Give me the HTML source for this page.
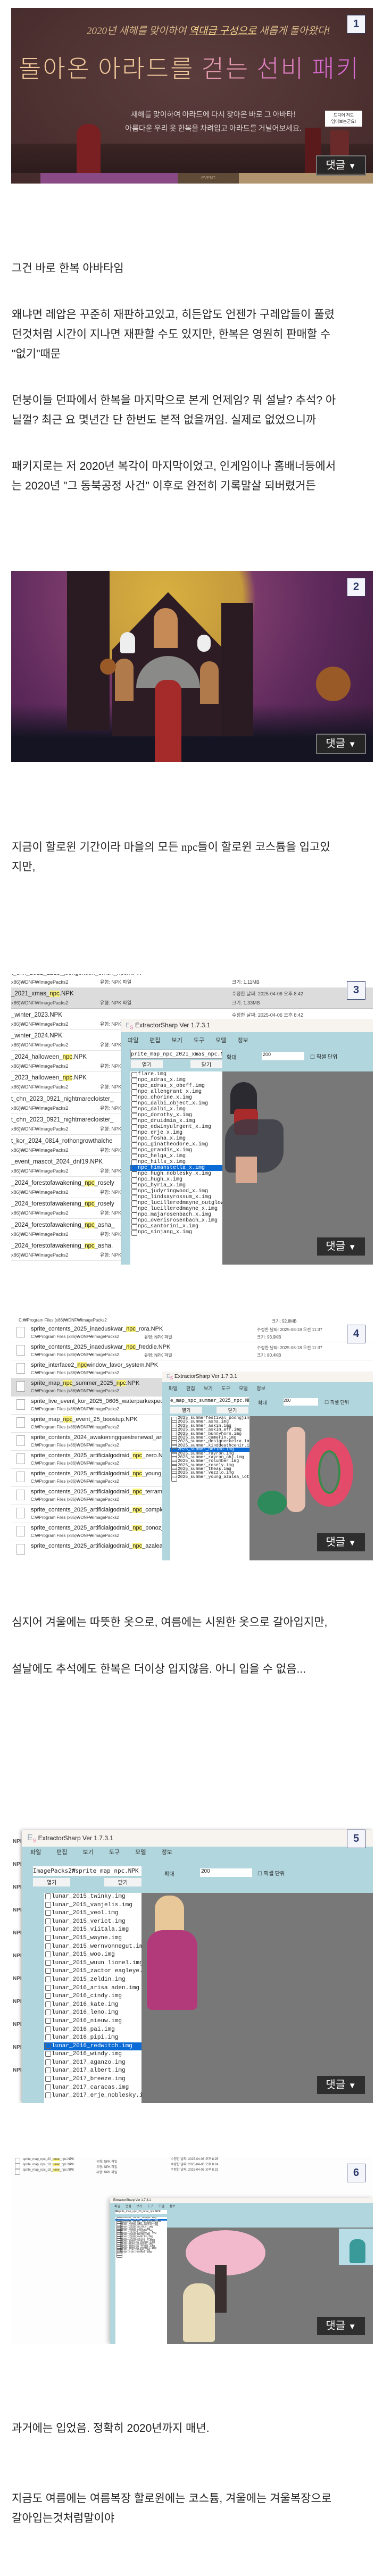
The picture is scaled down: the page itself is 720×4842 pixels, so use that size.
<!DOCTYPE html>
<html><head><meta charset="utf-8">
<style>
*{margin:0;padding:0;box-sizing:border-box}
body{width:720px;height:4842px;background:#fff;position:relative;overflow:hidden;font-family:"Liberation Sans","Noto Sans CJK KR",sans-serif;color:#222}
.t{position:absolute;left:22px;font-size:21px;line-height:37px;white-space:nowrap;color:#222}
.img{position:absolute;left:21px;width:680px;overflow:hidden}
.badge{position:absolute;right:14px;top:13px;width:35px;height:35px;background:#f4f5fa;border:1.5px solid #2c3a6b;color:#2c3a6b;font:bold 20px/32px "Liberation Sans",sans-serif;text-align:center;z-index:5}
.btn{position:absolute;right:13px;bottom:15px;width:94px;height:38px;background:rgba(40,40,40,.92);border:2px solid #777;color:#fff;font:20px/34px "Liberation Sans","Noto Sans CJK KR",sans-serif;text-align:center;z-index:5}
.btn span{font-size:15px}
.abs{position:absolute}
.row{position:absolute;left:0;height:39px;width:680px;border-bottom:1px solid #e4e4e4;font:12px/16px "Liberation Sans","Noto Sans CJK KR",sans-serif;color:#222;white-space:nowrap}
.row .a{position:absolute;left:0;top:3px;font-size:11.5px}
.row .b{position:absolute;left:0;top:20px;font-size:9px;color:#444}
.row .c{position:absolute;left:167px;top:20px;font-size:9px;color:#444}
.row .d{position:absolute;left:415px;top:3px;font-size:9px;color:#444}
.row .e{position:absolute;left:415px;top:20px;font-size:9px;color:#444}
.hl{background:#fbf27a}
.list{position:absolute;background:#fff;overflow:hidden;font:10px/11px "Liberation Mono",monospace;color:#222;white-space:nowrap}
.list div{padding-left:14px;position:relative;height:11px}
.list div:before{content:"";position:absolute;left:2px;top:1px;width:9px;height:9px;border:1px solid #666;border-radius:2px}
.list .sel{background:#0a6ad6;color:#fff}
.win{position:absolute;background:#b1d6dd}
.wt{position:absolute;left:0;right:0;top:0;background:#f7f4f0;font:12px "Liberation Sans",sans-serif;color:#222}
.menu{position:absolute;font:11px "Liberation Sans","Noto Sans CJK KR",sans-serif;color:#333;white-space:nowrap;word-spacing:18px}
.gray{position:absolute;background:#787878}
</style></head><body>

<!-- Image 1 -->
<div class="img" style="top:15px;height:330px;background:#4b2f30">
  <div class="abs" style="left:0;top:0;width:680px;height:330px;background:radial-gradient(ellipse at 50% 40%,#5a3c3c 0%,#4e3131 60%,#432a2b 100%)"></div>
  <div class="abs" style="left:142px;top:28px;font:italic 19px 'Liberation Serif','Noto Sans CJK KR',serif;color:#d9b98a;white-space:nowrap">2020년 새해를 맞이하여 <span style="color:#f3d38c;text-decoration:underline">역대급 구성으로</span> 새롭게 돌아왔다!</div>
  <div class="abs" style="left:14px;top:78px;font:300 46px 'Noto Sans CJK KR',sans-serif;color:#f0c89a;white-space:nowrap;letter-spacing:3px">돌아온 아라드를 <span style="color:#e89bb0">걷는</span> <span style="color:#e080c2">선비</span> <span style="color:#d66ad0">패키</span></div>
  <div class="abs" style="left:190px;top:187px;width:380px;text-align:center;font:14px/26px 'Noto Sans CJK KR',sans-serif;color:#d8cfcd">새해를 맞이하여 아라드에 다시 찾아온 바로 그 아바타!<br>아름다운 우리 옷 한복을 차려입고 아라드를 거닐어보세요.</div>
  <div class="abs" style="left:200px;top:254px;font:bold 13px 'Noto Sans CJK KR',sans-serif;color:#e8c98d;white-space:nowrap">판매 기간 : 2020년 1월 1일(수) 00시 ~ 1월 30일(목) 점검 전</div>
  <div class="abs" style="left:590px;top:193px;width:70px;height:30px;background:#fff;font:8px/12px 'Noto Sans CJK KR',sans-serif;text-align:center;padding-top:3px;color:#222">드디어 저도<br>입어보는군요!</div>
  <div class="abs" style="left:0;top:255px;width:680px;height:55px;background:linear-gradient(#3a2424,#2d1c1d)"></div>
  <div class="abs" style="left:123px;top:218px;width:45px;height:100px;background:#7a1f22;border-radius:20px 20px 6px 6px"></div>
  <div class="abs" style="left:552px;top:225px;width:30px;height:95px;background:#5a1a1c"></div>
  <div class="abs" style="left:600px;top:230px;width:35px;height:90px;background:#6a2a2a"></div>
  <div class="abs" style="left:55px;top:310px;width:258px;height:20px;background:#8a4a86"></div>
  <div class="abs" style="left:313px;top:310px;width:115px;height:20px;background:#5e4a36;font-size:8px;text-align:center;line-height:20px;color:#b9a08a">-EVENT-</div>
  <div class="abs" style="left:428px;top:310px;width:252px;height:20px;background:#b0946e"></div>
  <div class="badge">1</div><div class="btn">댓글 <span>▼</span></div>
</div>

<div class="t" style="top:486px">그건 바로 한복 아바타임</div>
<div class="t" style="top:573px">왜냐면 레압은 꾸준히 재판하고있고, 히든압도 언젠가 구레압들이 풀렸<br>던것처럼 시간이 지나면 재판할 수도 있지만, 한복은 영원히 판매할 수<br>"없기"때문</div>
<div class="t" style="top:734px">던붕이들 던파에서 한복을 마지막으로 본게 언제임? 뭐 설날? 추석? 아<br>닐껄? 최근 요 몇년간 단 한번도 본적 없을꺼임. 실제로 없었으니까</div>
<div class="t" style="top:858px">패키지로는 저 2020년 복각이 마지막이었고, 인게임이나  홈배너등에서<br>는 2020년 "그 동북공정 사건" 이후로 완전히 기록말살 되버렸거든</div>

<!-- Image 2 -->
<div class="img" style="top:1073px;height:359px;background:#3a1d3e">
  <div class="abs" style="left:0;top:0;width:680px;height:359px;background:radial-gradient(circle at 285px 50px,#d8b040 0,#c49a3c 150px,#7a3a6a 175px,#5e2a5c 300px,#3a1a3c 520px)"></div>
  <div class="abs" style="left:0;top:250px;width:680px;height:109px;background:linear-gradient(rgba(20,15,30,0),#141422 60%)"></div>
  <div class="abs" style="left:105px;top:0;width:80px;height:300px;background:#2a1a22"></div>
  <div class="abs" style="left:190px;top:40px;width:210px;height:270px;background:#2e1c24;clip-path:polygon(50% 0,100% 40%,100% 100%,0 100%,0 40%)"></div>
  <div class="abs" style="left:395px;top:60px;width:60px;height:250px;background:#2a1a22"></div>
  <div class="abs" style="left:268px;top:70px;width:45px;height:75px;background:#c58a55;border-radius:22px 22px 0 0"></div>
  <div class="abs" style="left:195px;top:165px;width:35px;height:80px;background:#b07a4a;border-radius:17px 17px 0 0"></div>
  <div class="abs" style="left:355px;top:170px;width:35px;height:80px;background:#b07a4a;border-radius:17px 17px 0 0"></div>
  <div class="abs" style="left:235px;top:160px;width:120px;height:60px;background:#8a8a88;border-radius:60px 60px 0 0"></div>
  <div class="abs" style="left:270px;top:205px;width:50px;height:154px;background:#a52a2a;border-radius:20px 20px 0 0"></div>
  <div class="abs" style="left:573px;top:180px;width:65px;height:65px;background:#9a5a28;border-radius:50%"></div>
  <div class="abs" style="left:167px;top:165px;width:30px;height:30px;background:#9a5a28;border-radius:50%"></div>
  <div class="abs" style="left:205px;top:115px;width:28px;height:40px;background:#eee;border-radius:14px 14px 4px 4px"></div>
  <div class="abs" style="left:350px;top:120px;width:25px;height:32px;background:#eee;border-radius:12px"></div>
  <div class="badge">2</div><div class="btn">댓글 <span>▼</span></div>
</div>

<div class="t" style="top:1574px">지금이 할로윈 기간이라 마을의 모든 <span style="font-family:'Liberation Serif',serif">npc</span>들이 할로윈 코스튬을 입고있<br>지만,</div>

<!-- Image 3 -->
<div class="img" style="top:1831px;height:546px;background:#fff">
  <div class="row" style="top:-13px"><span class="a">t_chn_2021_1215_joongchcon_omen_npc.NPK</span><span class="b">x86)₩DNF₩ImagePacks2</span><span class="c">유형: NPK 파일</span><span class="e">크기: 1.11MB</span></div>
  <div class="row" style="top:26px;background:#dcdcdc;border-bottom:1px solid #bbb"><span class="a">_2021_xmas_<span class="hl">npc</span>.NPK</span><span class="b">x86)₩DNF₩ImagePacks2</span><span class="c">유형: NPK 파일</span><span class="d">수정한 날짜: 2025-04-06 오후 8:42</span><span class="e">크기: 1.33MB</span></div>
  <div class="row" style="top:66px"><span class="a">_winter_2023.NPK</span><span class="b">x86)₩DNF₩ImagePacks2</span><span class="c">유형: NPK</span><span class="d">수정한 날짜: 2025-04-06 오후 8:42</span></div>
  <div class="row" style="top:105px"><span class="a">_winter_2024.NPK</span><span class="b">x86)₩DNF₩ImagePacks2</span><span class="c">유형: NPK</span></div>
  <div class="row" style="top:145px"><span class="a">_2024_halloween_<span class="hl">npc</span>.NPK</span><span class="b">x86)₩DNF₩ImagePacks2</span><span class="c">유형: NPK</span></div>
  <div class="row" style="top:184px"><span class="a">_2023_halloween_<span class="hl">npc</span>.NPK</span><span class="b">x86)₩DNF₩ImagePacks2</span><span class="c">유형: NPK</span></div>
  <div class="row" style="top:224px"><span class="a">t_chn_2023_0921_nightmarecloister_</span><span class="b">x86)₩DNF₩ImagePacks2</span><span class="c">유형: NPK</span></div>
  <div class="row" style="top:263px"><span class="a">t_chn_2023_0921_nightmarecloister_</span><span class="b">x86)₩DNF₩ImagePacks2</span><span class="c">유형: NPK</span></div>
  <div class="row" style="top:303px"><span class="a">t_kor_2024_0814_rothongrowthalche</span><span class="b">x86)₩DNF₩ImagePacks2</span><span class="c">유형: NPK</span></div>
  <div class="row" style="top:342px"><span class="a">_event_mascot_2024_dnf19.NPK</span><span class="b">x86)₩DNF₩ImagePacks2</span><span class="c">유형: NPK</span></div>
  <div class="row" style="top:382px"><span class="a">_2024_forestofawakening_<span class="hl">npc</span>_rosely</span><span class="b">x86)₩DNF₩ImagePacks2</span><span class="c">유형: NPK</span></div>
  <div class="row" style="top:421px"><span class="a">_2024_forestofawakening_<span class="hl">npc</span>_rosely</span><span class="b">x86)₩DNF₩ImagePacks2</span><span class="c">유형: NPK</span></div>
  <div class="row" style="top:461px"><span class="a">_2024_forestofawakening_<span class="hl">npc</span>_asha_</span><span class="b">x86)₩DNF₩ImagePacks2</span><span class="c">유형: NPK</span></div>
  <div class="row" style="top:500px"><span class="a">_2024_forestofawakening_<span class="hl">npc</span>_asha.</span><span class="b">x86)₩DNF₩ImagePacks2</span><span class="c">유형: NPK</span></div>
  <div class="win" style="left:206px;top:84px;width:474px;height:462px;border-left:1px solid #aaa">
    <div class="wt" style="height:25px;line-height:25px;padding-left:8px"><span style="color:#9ab">E<sub style="color:#d7a">S</sub></span> ExtractorSharp Ver 1.7.3.1</div>
    <div class="menu" style="left:12px;top:32px">파일 편집 보기 도구 모델 정보</div>
    <div class="abs" style="left:17px;top:58px;width:173px;height:17px;background:#fff;border:1px solid #999;font:10px/15px monospace;overflow:hidden;white-space:nowrap">prite_map_npc_2021_xmas_npc.NPK</div>
    <div class="abs" style="left:18px;top:78px;width:60px;height:15px;background:#f3f3f3;font-size:10px;text-align:center">열기</div>
    <div class="abs" style="left:130px;top:78px;width:60px;height:15px;background:#f3f3f3;font-size:10px;text-align:center">닫기</div>
    <div class="abs" style="left:198px;top:64px;font-size:10px">확대</div>
    <div class="abs" style="left:264px;top:62px;width:80px;height:16px;background:#fff;font-size:9px;padding-left:2px">200</div>
    <div class="abs" style="left:355px;top:63px;font-size:10px">☐ 픽셀 단위</div>
    <div class="list" style="left:17px;top:99px;width:173px;height:363px">
      <div>flare.img</div><div>npc_adras_x.img</div><div>npc_adras_x_obeff.img</div><div>npc_allengrant_x.img</div><div>npc_chorine_x.img</div><div>npc_dalbi_object_x.img</div><div>npc_dalbi_x.img</div><div>npc_dorothy_x.img</div><div>npc_druidmia_x.img</div><div>npc_edwinyulrgent_x.img</div><div>npc_erje_x.img</div><div>npc_fosha_x.img</div><div>npc_ginatheodore_x.img</div><div>npc_grandis_x.img</div><div>npc_helga_x.img</div><div>npc_hills_x.img</div><div class="sel">npc_himanstella_x.img</div><div>npc_hugh_noblesky_x.img</div><div>npc_hugh_x.img</div><div>npc_hyria_x.img</div><div>npc_judyringwood_x.img</div><div>npc_lindsayrossum_x.img</div><div>npc_lucilleredmayne_outglow_x.i</div><div>npc_lucilleredmayne_x.img</div><div>npc_majarosenbach_x.img</div><div>npc_overisrosenbach_x.img</div><div>npc_santorini_x.img</div><div>npc_sinjang_x.img</div>
    </div>
    <div class="gray" style="left:190px;top:99px;width:284px;height:363px">
      <div class="abs" style="left:15px;top:20px;width:50px;height:60px;background:#2a2a30;border-radius:25px 25px 0 0"></div>
      <div class="abs" style="left:22px;top:70px;width:45px;height:50px;background:#a82a2a;border-radius:8px"></div>
      <div class="abs" style="left:5px;top:90px;width:110px;height:100px;background:#3a3a44;border-radius:40px 20px 40px 10px;opacity:.8"></div>
      <div class="abs" style="left:25px;top:160px;width:40px;height:50px;background:#d8a890"></div>
    </div>
  </div>
  <div class="badge">3</div><div class="btn">댓글 <span>▼</span></div>
</div>

<!-- Image 4 -->
<div class="img" style="top:2477px;height:456px;background:#fff;font-family:'Liberation Sans','Noto Sans CJK KR',sans-serif">
  <div class="abs" style="left:0;top:0;width:680px;height:456px">
    <div class="abs" style="left:14px;top:0;font-size:8px;color:#444">C:₩Program Files (x86)₩DNF₩ImagePacks2</div>
    <div class="abs" style="left:490px;top:1px;font-size:8px;color:#444">크기: 52.8MB</div>
  </div>
  <div style="position:absolute;left:0;top:12px;width:680px;font-size:11px;color:#222">
    <div style="position:absolute;top:0;height:34px;width:680px;border-bottom:1px solid #e2e2e2"><div class="abs" style="left:10px;top:5px;width:16px;height:20px;border:1px solid #aaa"></div><div class="abs" style="left:37px;top:3px;white-space:nowrap">sprite_contents_2025_inaeduskwar_<span class="hl">npc</span>_rora.NPK</div><div class="abs" style="left:37px;top:19px;font-size:8px;color:#444">C:₩Program Files (x86)₩DNF₩ImagePacks2</div><div class="abs" style="left:250px;top:19px;font-size:8px;color:#444">유형: NPK 파일</div><div class="abs" style="left:462px;top:5px;font-size:8px;color:#444">수정한 날짜: 2025-08-18 오전 11:37</div><div class="abs" style="left:462px;top:19px;font-size:8px;color:#444">크기: 93.9KB</div></div>
    <div style="position:absolute;top:34px;height:34px;width:680px;border-bottom:1px solid #e2e2e2"><div class="abs" style="left:10px;top:5px;width:16px;height:20px;border:1px solid #aaa"></div><div class="abs" style="left:37px;top:3px;white-space:nowrap">sprite_contents_2025_inaeduskwar_<span class="hl">npc</span>_freddie.NPK</div><div class="abs" style="left:37px;top:19px;font-size:8px;color:#444">C:₩Program Files (x86)₩DNF₩ImagePacks2</div><div class="abs" style="left:250px;top:19px;font-size:8px;color:#444">유형: NPK 파일</div><div class="abs" style="left:462px;top:5px;font-size:8px;color:#444">수정한 날짜: 2025-08-18 오전 11:37</div><div class="abs" style="left:462px;top:19px;font-size:8px;color:#444">크기: 80.4KB</div></div>
    <div style="position:absolute;top:68px;height:34px;width:680px;border-bottom:1px solid #e2e2e2"><div class="abs" style="left:10px;top:5px;width:16px;height:20px;border:1px solid #aaa"></div><div class="abs" style="left:37px;top:3px;white-space:nowrap">sprite_interface2_<span class="hl">npc</span>window_favor_system.NPK</div><div class="abs" style="left:37px;top:19px;font-size:8px;color:#444">C:₩Program Files (x86)₩DNF₩ImagePacks2</div></div>
    <div style="position:absolute;top:102px;height:34px;width:680px;background:#dcdcdc"><div class="abs" style="left:10px;top:5px;width:16px;height:20px;border:1px solid #aaa;background:#fff"></div><div class="abs" style="left:37px;top:3px;white-space:nowrap">sprite_map_<span class="hl">npc</span>_summer_2025_<span class="hl">npc</span>.NPK</div><div class="abs" style="left:37px;top:19px;font-size:8px;color:#444">C:₩Program Files (x86)₩DNF₩ImagePacks2</div></div>
    <div style="position:absolute;top:136px;height:34px;width:680px;border-bottom:1px solid #e2e2e2"><div class="abs" style="left:10px;top:5px;width:16px;height:20px;border:1px solid #aaa"></div><div class="abs" style="left:37px;top:3px;white-space:nowrap">sprite_live_event_kor_2025_0605_waterparkexpeditio</div><div class="abs" style="left:37px;top:19px;font-size:8px;color:#444">C:₩Program Files (x86)₩DNF₩ImagePacks2</div></div>
    <div style="position:absolute;top:170px;height:34px;width:680px;border-bottom:1px solid #e2e2e2"><div class="abs" style="left:10px;top:5px;width:16px;height:20px;border:1px solid #aaa"></div><div class="abs" style="left:37px;top:3px;white-space:nowrap">sprite_map_<span class="hl">npc</span>_event_25_boostup.NPK</div><div class="abs" style="left:37px;top:19px;font-size:8px;color:#444">C:₩Program Files (x86)₩DNF₩ImagePacks2</div></div>
    <div style="position:absolute;top:204px;height:34px;width:680px;border-bottom:1px solid #e2e2e2"><div class="abs" style="left:10px;top:5px;width:16px;height:20px;border:1px solid #aaa"></div><div class="abs" style="left:37px;top:3px;white-space:nowrap">sprite_contents_2024_awakeningquestrenewal_arche</div><div class="abs" style="left:37px;top:19px;font-size:8px;color:#444">C:₩Program Files (x86)₩DNF₩ImagePacks2</div></div>
    <div style="position:absolute;top:238px;height:34px;width:680px;border-bottom:1px solid #e2e2e2"><div class="abs" style="left:10px;top:5px;width:16px;height:20px;border:1px solid #aaa"></div><div class="abs" style="left:37px;top:3px;white-space:nowrap">sprite_contents_2025_artificialgodraid_<span class="hl">npc</span>_zero.NPK</div><div class="abs" style="left:37px;top:19px;font-size:8px;color:#444">C:₩Program Files (x86)₩DNF₩ImagePacks2</div></div>
    <div style="position:absolute;top:272px;height:34px;width:680px;border-bottom:1px solid #e2e2e2"><div class="abs" style="left:10px;top:5px;width:16px;height:20px;border:1px solid #aaa"></div><div class="abs" style="left:37px;top:3px;white-space:nowrap">sprite_contents_2025_artificialgodraid_<span class="hl">npc</span>_young_a</div><div class="abs" style="left:37px;top:19px;font-size:8px;color:#444">C:₩Program Files (x86)₩DNF₩ImagePacks2</div></div>
    <div style="position:absolute;top:306px;height:34px;width:680px;border-bottom:1px solid #e2e2e2"><div class="abs" style="left:10px;top:5px;width:16px;height:20px;border:1px solid #aaa"></div><div class="abs" style="left:37px;top:3px;white-space:nowrap">sprite_contents_2025_artificialgodraid_<span class="hl">npc</span>_terraman</div><div class="abs" style="left:37px;top:19px;font-size:8px;color:#444">C:₩Program Files (x86)₩DNF₩ImagePacks2</div></div>
    <div style="position:absolute;top:340px;height:34px;width:680px;border-bottom:1px solid #e2e2e2"><div class="abs" style="left:10px;top:5px;width:16px;height:20px;border:1px solid #aaa"></div><div class="abs" style="left:37px;top:3px;white-space:nowrap">sprite_contents_2025_artificialgodraid_<span class="hl">npc</span>_complete</div><div class="abs" style="left:37px;top:19px;font-size:8px;color:#444">C:₩Program Files (x86)₩DNF₩ImagePacks2</div></div>
    <div style="position:absolute;top:374px;height:34px;width:680px;border-bottom:1px solid #e2e2e2"><div class="abs" style="left:10px;top:5px;width:16px;height:20px;border:1px solid #aaa"></div><div class="abs" style="left:37px;top:3px;white-space:nowrap">sprite_contents_2025_artificialgodraid_<span class="hl">npc</span>_bonoz_a</div><div class="abs" style="left:37px;top:19px;font-size:8px;color:#444">C:₩Program Files (x86)₩DNF₩ImagePacks2</div></div>
    <div style="position:absolute;top:408px;height:34px;width:680px"><div class="abs" style="left:10px;top:5px;width:16px;height:20px;border:1px solid #aaa"></div><div class="abs" style="left:37px;top:3px;white-space:nowrap">sprite_contents_2025_artificialgodraid_<span class="hl">npc</span>_azalea_l</div></div>
  </div>
  <div class="win" style="left:284px;top:101px;width:396px;height:355px">
    <div class="wt" style="height:20px;line-height:20px;padding-left:8px;font-size:10px"><span style="color:#9ab">E<sub style="color:#d7a">S</sub></span> ExtractorSharp Ver 1.7.3.1</div>
    <div class="menu" style="left:12px;top:25px;font-size:9px;word-spacing:14px">파일 편집 보기 도구 모델 정보</div>
    <div class="abs" style="left:15px;top:48px;width:148px;height:15px;background:#fff;font:9px/14px monospace;overflow:hidden;white-space:nowrap">e_map_npc_summer_2025_npc.NPK</div>
    <div class="abs" style="left:15px;top:66px;width:60px;height:13px;background:#f3f3f3;font-size:9px;text-align:center">열기</div>
    <div class="abs" style="left:102px;top:66px;width:60px;height:13px;background:#f3f3f3;font-size:9px;text-align:center">닫기</div>
    <div class="abs" style="left:180px;top:52px;font-size:9px">확대</div>
    <div class="abs" style="left:228px;top:50px;width:65px;height:14px;background:#fff;font-size:8px">200</div>
    <div class="abs" style="left:305px;top:51px;font-size:9px">☐ 픽셀 단위</div>
    <div class="list" style="left:15px;top:84px;width:149px;height:271px;font-size:8px;line-height:7.4px">
      <div style="height:7.4px">2025_summerfestival_poongjin.im</div><div style="height:7.4px">2025_summer_asha.img</div><div style="height:7.4px">2025_summer_askin.img</div><div style="height:7.4px">2025_summer_askin_eff.img</div><div style="height:7.4px">2025_summer_bunnyhorn.img</div><div style="height:7.4px">2025_summer_camerin.img</div><div style="height:7.4px">2025_summer_designerkeira.img</div><div style="height:7.4px">2025_summer_kinddeathcenir.img</div><div class="sel" style="height:7.4px">2025_summer_nerimo.img</div><div style="height:7.4px">2025_summer_rayron.img</div><div style="height:7.4px">2025_summer_rayron_obj.img</div><div style="height:7.4px">2025_summer_rolumber.img</div><div style="height:7.4px">2025_summer_rosely.img</div><div style="height:7.4px">2025_summer_theas.img</div><div style="height:7.4px">2025_summer_vezzlo.img</div><div style="height:7.4px">2025_summer_young_azalea_lot.i</div>
    </div>
    <div class="gray" style="left:164px;top:84px;width:232px;height:271px">
      <div class="abs" style="left:105px;top:40px;width:90px;height:130px;border:24px solid #e44a6a;border-radius:50%;box-shadow:inset 0 0 0 4px #3a8a4a"></div>
      <div class="abs" style="left:15px;top:140px;width:55px;height:45px;background:#2e8a5a;border-radius:50%"></div>
      <div class="abs" style="left:70px;top:20px;width:35px;height:160px;background:#e8c0b0;border-radius:15px"></div>
    </div>
  </div>
  <div class="badge">4</div><div class="btn">댓글 <span>▼</span></div>
</div>

<div class="t" style="top:3031px">심지어 겨울에는 따뜻한 옷으로, 여름에는 시원한 옷으로 갈아입지만,</div>
<div class="t" style="top:3119px">설날에도 추석에도 한복은 더이상 입지않음. 아니 입을 수 없음...</div>

<!-- Image 5 -->
<div class="img" style="top:3426px;height:527px;background:#fff">
  <div class="abs" style="left:3px;top:14px;font:bold 10px/43px 'Liberation Sans',sans-serif;color:#555;width:20px">NPI NPI NPI NPI NPI NPI NPI NPI NPI NPI NPI</div>
  <div class="win" style="left:20px;top:14px;width:660px;height:513px;box-shadow:-2px 0 6px rgba(0,0,0,.3)">
    <div class="wt" style="height:31px;line-height:29px;padding-left:10px;font-size:12px"><span style="color:#9ab;font-size:16px">E<sub style="color:#d7a;font-size:10px">S</sub></span> ExtractorSharp Ver 1.7.3.1</div>
    <div class="menu" style="left:16px;top:33px;font-size:11px;word-spacing:26px">파일 편집 보기 도구 모델 정보</div>
    <div class="abs" style="left:21px;top:68px;width:204px;height:18px;background:#fff;font:11px/17px monospace;overflow:hidden;white-space:nowrap">ImagePacks2₩sprite_map_npc.NPK</div>
    <div class="abs" style="left:21px;top:90px;width:70px;height:16px;background:#f3f3f3;font-size:10px;text-align:center">열기</div>
    <div class="abs" style="left:155px;top:90px;width:70px;height:16px;background:#f3f3f3;font-size:10px;text-align:center">닫기</div>
    <div class="abs" style="left:268px;top:74px;font-size:10px">확대</div>
    <div class="abs" style="left:335px;top:72px;width:98px;height:16px;background:#fff;font-size:10px;padding-left:2px">200</div>
    <div class="abs" style="left:443px;top:73px;font-size:10px">☐ 픽셀 단위</div>
    <div class="list" style="left:42px;top:118px;width:204px;height:395px;font-size:11px;line-height:15.6px">
      <div style="height:15.6px">lunar_2015_twinky.img</div><div style="height:15.6px">lunar_2015_vanjelis.img</div><div style="height:15.6px">lunar_2015_veol.img</div><div style="height:15.6px">lunar_2015_verict.img</div><div style="height:15.6px">lunar_2015_viitala.img</div><div style="height:15.6px">lunar_2015_wayne.img</div><div style="height:15.6px">lunar_2015_wernvonnegut.img</div><div style="height:15.6px">lunar_2015_woo.img</div><div style="height:15.6px">lunar_2015_wuun lionel.img</div><div style="height:15.6px">lunar_2015_zactor eagleye.img</div><div style="height:15.6px">lunar_2015_zeldin.img</div><div style="height:15.6px">lunar_2016_arisa aden.img</div><div style="height:15.6px">lunar_2016_cindy.img</div><div style="height:15.6px">lunar_2016_kate.img</div><div style="height:15.6px">lunar_2016_leno.img</div><div style="height:15.6px">lunar_2016_nieuw.img</div><div style="height:15.6px">lunar_2016_pai.img</div><div style="height:15.6px">lunar_2016_pipi.img</div><div class="sel" style="height:15.6px">lunar_2016_redwitch.img</div><div style="height:15.6px">lunar_2016_windy.img</div><div style="height:15.6px">lunar_2017_aganzo.img</div><div style="height:15.6px">lunar_2017_albert.img</div><div style="height:15.6px">lunar_2017_breeze.img</div><div style="height:15.6px">lunar_2017_caracas.img</div><div style="height:15.6px">lunar_2017_erje_noblesky.img</div>
    </div>
    <div class="gray" style="left:225px;top:118px;width:435px;height:395px">
      <div class="abs" style="left:25px;top:5px;width:55px;height:80px;background:#e8c898;border-radius:25px 25px 5px 5px"></div>
      <div class="abs" style="left:10px;top:70px;width:95px;height:150px;background:#b23a7a;border-radius:30px 30px 10px 10px"></div>
    </div>
  </div>
  <div class="badge">5</div><div class="btn">댓글 <span>▼</span></div>
</div>

<!-- Image 6 -->
<div class="img" style="top:4054px;height:352px;background:#fdfdfd">
  <div class="abs" style="left:0;top:0;width:680px;font:6px/10px 'Liberation Sans',sans-serif;color:#444">
    <div class="abs" style="left:7px;top:2px;width:10px;height:12px;border:1px solid #aaa"></div><div class="abs" style="left:22px;top:0;white-space:nowrap">sprite_map_npc_20_<span class="hl">lunar</span>_npc.NPK</div><div class="abs" style="left:160px;top:5px">유형: NPK 파일</div><div class="abs" style="left:300px;top:0">수정한 날짜: 2025-04-06 오후 8:25</div>
    <div class="abs" style="left:7px;top:12px;width:10px;height:12px;border:1px solid #aaa"></div><div class="abs" style="left:22px;top:10px;white-space:nowrap">sprite_map_npc_19_<span class="hl">lunar</span>_npc.NPK</div><div class="abs" style="left:160px;top:15px">유형: NPK 파일</div><div class="abs" style="left:300px;top:10px">수정한 날짜: 2025-04-06 오후 8:24</div>
    <div class="abs" style="left:7px;top:22px;width:10px;height:12px;border:1px solid #aaa"></div><div class="abs" style="left:22px;top:20px;white-space:nowrap">sprite_map_npc_18_<span class="hl">lunar</span>_npc.NPK</div><div class="abs" style="left:160px;top:25px">유형: NPK 파일</div><div class="abs" style="left:300px;top:20px">수정한 날짜: 2025-04-06 오후 8:23</div>
  </div>
  <div class="win" style="left:186px;top:78px;width:494px;height:274px;box-shadow:-3px 0 8px rgba(0,0,0,.25)">
    <div class="wt" style="height:9px;font-size:6px;line-height:9px;padding-left:6px">ExtractorSharp Ver 1.7.3.1</div>
    <div class="menu" style="left:8px;top:10px;font-size:6px;word-spacing:8px">파일 편집 보기 도구 모델 정보</div>
    <div class="abs" style="left:10px;top:22px;width:97px;height:8px;background:#fff;font-size:5px;white-space:nowrap;overflow:hidden">₩sprite_map_npc_20_lunar_npc.NPK</div>
    <div class="list" style="left:10px;top:35px;width:97px;height:239px;font-size:5px;line-height:3.6px">
      <div style="height:3.6px;padding-left:8px">blossom_lunar_dodge.img</div><div class="sel" style="height:3.6px;padding-left:8px">blossom_lunar_normal.img</div><div style="height:3.6px;padding-left:8px">blossom_lunar_particle.img</div><div style="height:3.6px;padding-left:8px">lunar_2020_sin-jeong.img</div><div style="height:3.6px;padding-left:8px">lunar_2020_alexandra.img</div><div style="height:3.6px;padding-left:8px">lunar_2020_arthur.img</div><div style="height:3.6px;padding-left:8px">lunar_2020_ikki.img</div><div style="height:3.6px;padding-left:8px">lunar_2020_kaygin.img</div><div style="height:3.6px;padding-left:8px">lunar_2020_kaygin_n.img</div><div style="height:3.6px;padding-left:8px">lunar_2020_maja.img</div><div style="height:3.6px;padding-left:8px">lunar_2020_overis.img</div><div style="height:3.6px;padding-left:8px">lunar_2020_seira.img</div><div style="height:3.6px;padding-left:8px">lunar_2020_seira_n.img</div><div style="height:3.6px;padding-left:8px">lunar_monica_dodge.img</div><div style="height:3.6px;padding-left:8px">lunar_monica_back.img</div><div style="height:3.6px;padding-left:8px">lunar_monica_front.img</div><div style="height:3.6px;padding-left:8px">lunar_monica_normal.img</div><div style="height:3.6px;padding-left:8px">lunar_ron_dodge.img</div><div style="height:3.6px;padding-left:8px">lunar_ron_normal.img</div>
    </div>
    <div class="gray" style="left:107px;top:55px;width:387px;height:219px">
      <div class="abs" style="left:35px;top:5px;width:150px;height:85px;background:#f2b8cc;border-radius:50%"></div>
      <div class="abs" style="left:90px;top:70px;width:22px;height:90px;background:#3a3030"></div>
      <div class="abs" style="left:30px;top:105px;width:60px;height:110px;background:#e8dcb8;border-radius:25px 25px 5px 5px"></div>
      <div class="abs" style="left:323px;top:2px;width:64px;height:68px;background:#b8dde6"><div class="abs" style="left:20px;top:20px;width:30px;height:45px;background:#3a9a9a;border-radius:12px 12px 4px 4px"></div></div>
    </div>
  </div>
  <div class="badge">6</div><div class="btn">댓글 <span>▼</span></div>
</div>

<div class="t" style="top:4546px">과거에는 입었음. 정확히 2020년까지 매년.</div>
<div class="t" style="top:4678px">지금도 여름에는 여름복장 할로윈에는 코스튬, 겨울에는 겨울복장으로<br>갈아입는것처럼말이야</div>

</body></html>
